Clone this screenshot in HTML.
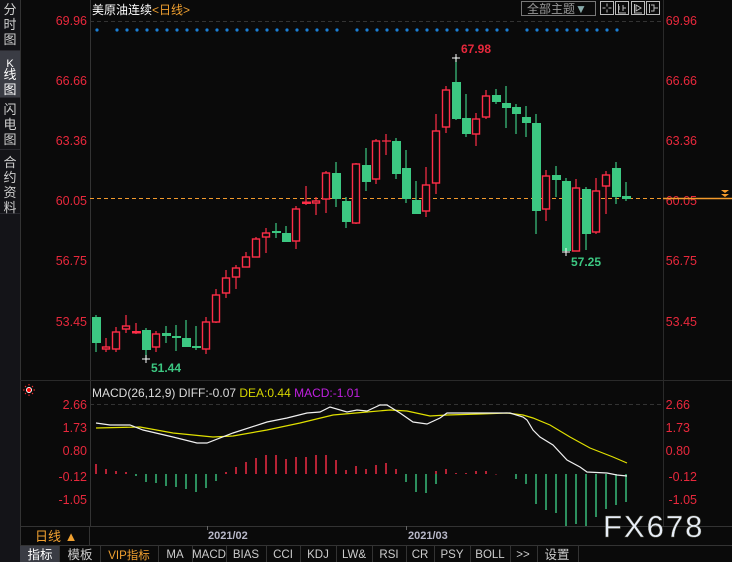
<!DOCTYPE html>
<html><head><meta charset="utf-8"><style>
html,body{margin:0;padding:0;background:#0a0a0a;width:732px;height:562px;overflow:hidden}
svg{display:block}
text{font-family:"Liberation Sans","Noto Sans CJK SC",sans-serif}
</style></head><body>
<svg width="732" height="562" viewBox="0 0 732 562" xmlns="http://www.w3.org/2000/svg">
<rect width="732" height="562" fill="#0a0a0a"/>
<!-- sidebar -->
<rect x="0" y="0" width="20" height="562" fill="#141418"/>
<rect x="0" y="51" width="20" height="46" fill="#3a3c44"/>
<path d="M0 50.5H20M0 97.5H20M0 149.5H20M0 213.5H20" stroke="#2a2a30"/>
<line x1="20.5" y1="0" x2="20.5" y2="562" stroke="#333"/>
<g font-size="13" fill="#cfcfcf" text-anchor="middle">
<text x="10" y="14">分</text><text x="10" y="29">时</text><text x="10" y="44">图</text>
<text x="10" y="67" fill="#fff" font-size="11">K</text><text x="10" y="79" fill="#fff">线</text><text x="10" y="94" fill="#fff">图</text>
<text x="10" y="114">闪</text><text x="10" y="129">电</text><text x="10" y="144">图</text>
<text x="10" y="167">合</text><text x="10" y="182">约</text><text x="10" y="197">资</text><text x="10" y="212">料</text>
</g>
<!-- axes lines -->
<line x1="90.5" y1="0" x2="90.5" y2="526" stroke="#333"/>
<line x1="663.5" y1="0" x2="663.5" y2="526" stroke="#2a2a2a"/>
<line x1="90" y1="21.5" x2="663" y2="21.5" stroke="#333" stroke-dasharray="4,3"/>
<line x1="90" y1="404.5" x2="663" y2="404.5" stroke="#333" stroke-dasharray="4,3"/>
<line x1="20" y1="380.5" x2="732" y2="380.5" stroke="#2a2a2a"/>
<line x1="20" y1="526.5" x2="732" y2="526.5" stroke="#333"/>
<line x1="20" y1="545.5" x2="732" y2="545.5" stroke="#333"/>
<line x1="89.5" y1="526" x2="89.5" y2="545" stroke="#333"/>
<!-- price labels -->
<g font-size="12.5" fill="#e8283c" text-anchor="end">
<text x="87" y="25">69.96</text><text x="87" y="85">66.66</text><text x="87" y="145">63.36</text><text x="87" y="205">60.05</text><text x="87" y="265">56.75</text><text x="87" y="326">53.45</text>
<text x="697" y="25">69.96</text><text x="697" y="85">66.66</text><text x="697" y="145">63.36</text><text x="697" y="205">60.05</text><text x="697" y="265">56.75</text><text x="697" y="326">53.45</text>
<text x="87" y="409">2.66</text><text x="87" y="432">1.73</text><text x="87" y="455">0.80</text><text x="87" y="481">-0.12</text><text x="87" y="504">-1.05</text>
<text x="690" y="409">2.66</text><text x="690" y="432">1.73</text><text x="690" y="455">0.80</text><text x="697" y="481">-0.12</text><text x="697" y="504">-1.05</text>
</g>
<!-- header -->
<text x="92" y="14" font-size="12" fill="#fff">美原油连续<tspan fill="#f0a030">&lt;日线&gt;</tspan></text>
<rect x="521.5" y="1.5" width="74" height="14" fill="#0a0a0a" stroke="#777"/>
<text x="527" y="13" font-size="12" fill="#999">全部主题<tspan fill="#8aa">▼</tspan></text>
<g fill="none" stroke="#bbb">
<rect x="600.5" y="1.5" width="13" height="13"/><rect x="615.5" y="1.5" width="13" height="13"/><rect x="631.5" y="1.5" width="13" height="13"/><rect x="646.5" y="1.5" width="13" height="13"/>
<path d="M607 3.5V6.5M607 9.5V12.5M602.5 8H605.5M608.5 8H611.5M618.5 4V13H626M619 6V10M623 5V11M623 8H626"/>
<path d="M634.5 4V13H642M636 5V11L641 8Z M649.5 4V13M651 5H654V11H651M654 8H658"/>
</g>
<!-- blue dots -->
<g fill="#1a7fd6">
<circle cx="97" cy="30" r="1.6"/><circle cx="117" cy="30" r="1.6"/><circle cx="127" cy="30" r="1.6"/><circle cx="137" cy="30" r="1.6"/><circle cx="147" cy="30" r="1.6"/><circle cx="157" cy="30" r="1.6"/><circle cx="167" cy="30" r="1.6"/><circle cx="177" cy="30" r="1.6"/><circle cx="187" cy="30" r="1.6"/><circle cx="197" cy="30" r="1.6"/><circle cx="207" cy="30" r="1.6"/><circle cx="217" cy="30" r="1.6"/><circle cx="227" cy="30" r="1.6"/><circle cx="237" cy="30" r="1.6"/><circle cx="247" cy="30" r="1.6"/><circle cx="257" cy="30" r="1.6"/><circle cx="267" cy="30" r="1.6"/><circle cx="277" cy="30" r="1.6"/><circle cx="287" cy="30" r="1.6"/><circle cx="297" cy="30" r="1.6"/><circle cx="307" cy="30" r="1.6"/><circle cx="317" cy="30" r="1.6"/><circle cx="327" cy="30" r="1.6"/><circle cx="337" cy="30" r="1.6"/><circle cx="357" cy="30" r="1.6"/><circle cx="367" cy="30" r="1.6"/><circle cx="377" cy="30" r="1.6"/><circle cx="387" cy="30" r="1.6"/><circle cx="397" cy="30" r="1.6"/><circle cx="407" cy="30" r="1.6"/><circle cx="417" cy="30" r="1.6"/><circle cx="427" cy="30" r="1.6"/><circle cx="437" cy="30" r="1.6"/><circle cx="447" cy="30" r="1.6"/><circle cx="457" cy="30" r="1.6"/><circle cx="467" cy="30" r="1.6"/><circle cx="477" cy="30" r="1.6"/><circle cx="487" cy="30" r="1.6"/><circle cx="497" cy="30" r="1.6"/><circle cx="507" cy="30" r="1.6"/><circle cx="527" cy="30" r="1.6"/><circle cx="537" cy="30" r="1.6"/><circle cx="547" cy="30" r="1.6"/><circle cx="557" cy="30" r="1.6"/><circle cx="567" cy="30" r="1.6"/><circle cx="577" cy="30" r="1.6"/><circle cx="587" cy="30" r="1.6"/><circle cx="597" cy="30" r="1.6"/><circle cx="607" cy="30" r="1.6"/><circle cx="617" cy="30" r="1.6"/>
</g>
<!-- orange line -->
<line x1="90" y1="198.5" x2="663" y2="198.5" stroke="#f39a2c" stroke-dasharray="4,3"/>
<line x1="663" y1="198.5" x2="732" y2="198.5" stroke="#f39a2c" stroke-width="1.5"/>
<path d="M721 190H729L725 193ZM721 194H729L725 197Z" fill="#f39a2c"/>
<!-- wicks -->
<path stroke="#3cc882" stroke-width="1.2" fill="none" d="M96 315V352M146 328V360M166 326V343M176 325V351M186 320V347M196 326V350M276 223V238M286 226V242M336 162V207M346 197V228M366 148V191M396 138V179M406 150V203M416 181V214M456 57V120M466 94V137M496 89V104M506 86V128M516 104V134M526 106V137M536 114V234M556 166V197M566 178V252M586 187V250M616 162V204M626 182V201"/>
<path stroke="#ff2e48" stroke-width="1.2" fill="none" d="M106 338V352M116 327V352M126 315V333M136 323V334M156 331V352M206 317V354M216 289V323M226 270V298M236 265V289M246 252V267M256 237V257M266 228V253M296 206V249M306 186V205M316 197V215M326 171V213M356 163V224M376 139V184M386 134V155M382 141H391M426 167V217M436 114V194M446 86V133M476 113V146M486 90V119M546 170V221M576 179V251M596 178V234M606 171V214"/>
<!-- green bodies -->
<g fill="#3cc882">
<rect x="92" y="317" width="9" height="26"/><rect x="142" y="330" width="9" height="20"/><rect x="162" y="333" width="9" height="3"/><rect x="172" y="336" width="9" height="2"/><rect x="182" y="338" width="9" height="9"/><rect x="192" y="346" width="9" height="2"/><rect x="272" y="231" width="9" height="2"/><rect x="282" y="233" width="9" height="9"/><rect x="332" y="173" width="9" height="26"/><rect x="342" y="201" width="9" height="21"/><rect x="362" y="165" width="9" height="17"/><rect x="392" y="141" width="9" height="33"/><rect x="402" y="168" width="9" height="31"/><rect x="412" y="200" width="9" height="14"/><rect x="452" y="82" width="9" height="37"/><rect x="462" y="118" width="9" height="16"/><rect x="492" y="95" width="9" height="7"/><rect x="502" y="103" width="9" height="5"/><rect x="512" y="107" width="9" height="7"/><rect x="522" y="117" width="9" height="6"/><rect x="532" y="123" width="9" height="88"/><rect x="552" y="175" width="9" height="5"/><rect x="562" y="181" width="9" height="70"/><rect x="582" y="189" width="9" height="45"/><rect x="612" y="168" width="9" height="29"/><rect x="622" y="196" width="9" height="3"/>
</g>
<!-- red bodies -->
<g fill="#0a0a0a" stroke="#ff2e48" stroke-width="1.4">
<rect x="102.5" y="347" width="7" height="2"/><rect x="112.5" y="332" width="7" height="17"/><rect x="122.5" y="326" width="7" height="3"/><rect x="152.5" y="334" width="7" height="13"/><rect x="202.5" y="322" width="7" height="27"/><rect x="212.5" y="295" width="7" height="27"/><rect x="222.5" y="278" width="7" height="15"/><rect x="232.5" y="268" width="7" height="9"/><rect x="242.5" y="257" width="7" height="10"/><rect x="252.5" y="239" width="7" height="18"/><rect x="262.5" y="233" width="7" height="4"/><rect x="292.5" y="209" width="7" height="32"/><rect x="312.5" y="201" width="7" height="2"/><rect x="322.5" y="173" width="7" height="26"/><rect x="352.5" y="164" width="7" height="59"/><rect x="372.5" y="141" width="7" height="38"/><rect x="422.5" y="185" width="7" height="26"/><rect x="432.5" y="131" width="7" height="52"/><rect x="442.5" y="90" width="7" height="37"/><rect x="472.5" y="119" width="7" height="15"/><rect x="482.5" y="96" width="7" height="21"/><rect x="542.5" y="176" width="7" height="33"/><rect x="572.5" y="188" width="7" height="63"/><rect x="592.5" y="191" width="7" height="41"/><rect x="602.5" y="175" width="7" height="11"/>
</g>
<rect x="132" y="331" width="9" height="2.5" fill="#ff2e48"/><rect x="302" y="201.5" width="9" height="2.5" fill="#ff2e48"/>
<!-- markers -->
<text x="461" y="53" font-size="12" font-weight="bold" fill="#e8283c">67.98</text>
<text x="151" y="372" font-size="12" font-weight="bold" fill="#3cc882">51.44</text>
<text x="571" y="266" font-size="12" font-weight="bold" fill="#3cc882">57.25</text>
<path d="M452 58H460M456 54V62M142 359H150M146 355V363M562 252H570M566 248V256" stroke="#fff"/>
<!-- MACD -->
<circle cx="29" cy="390" r="2.5" fill="#f00" stroke="#fff" stroke-width="1"/>
<path d="M29 384V385.5M29 394.5V396M23 390H24.5M33.5 390H35M25 386L26 387M33 386L32 387M25 394L26 393M33 394L32 393" stroke="#f33"/>
<text x="92" y="397" font-size="12" fill="#ddd">MACD(26,12,9) DIFF:-0.07 <tspan fill="#d8d800">DEA:0.44</tspan> <tspan fill="#c020e0">MACD:-1.01</tspan></text>
<path stroke="#ff2e48" stroke-width="1.4" d="M96 474V464M106 474V469M116 474V471M126 474V472M226 474V472M236 474V467M246 474V462M256 474V458M266 474V455M276 474V455M286 474V459M296 474V457M306 474V457M316 474V455M326 474V455M336 474V460M346 474V470M356 474V466M366 474V469M376 474V465M386 474V463M396 474V469M436 474V471M446 474V469M456 474V473M466 474V473M476 474V471M486 474V471M496 474V474.5"/>
<path stroke="#3cc882" stroke-width="1.4" d="M136 474V476M146 474V482M156 474V483M166 474V486M176 474V487M186 474V489M196 474V492M206 474V488M216 474V481M406 474V482M416 474V492M426 474V493M436 474V484M516 474V479M526 474V484M536 474V504M546 474V510M556 474V513M566 474V526M576 474V524M586 474V526M596 474V517M606 474V509M616 474V505M626 474V502"/>
<polyline fill="none" stroke="#e0e000" stroke-width="1.2" points="96,428 140,427 173,433 213,437 233,436 267,430 300,423 333,415 367,412 390,410 407,411 430,416 447,415 480,414 507,413 523,415 533,418 550,425 570,437 590,448 613,457 627,463"/>
<polyline fill="none" stroke="#f0f0f0" stroke-width="1.2" points="96,423 110,425 130,425 143,430 173,437 197,443 207,443 233,433 267,422 287,418 307,413 320,412 330,407 347,412 357,410 367,411 380,405 387,405 400,413 413,422 427,424 440,418 447,413 487,413 510,413 523,417 527,420 533,430 540,437 553,445 567,460 580,467 587,472 607,473 617,475 627,476"/>
<!-- date axis -->
<line x1="207.5" y1="526" x2="207.5" y2="530" stroke="#666"/><line x1="406.5" y1="526" x2="406.5" y2="530" stroke="#666"/>
<text x="35" y="541" font-size="13" fill="#f0a030">日线 ▲</text>
<text x="208" y="539" font-size="11" font-weight="bold" fill="#b8b8c8">2021/02</text>
<text x="408" y="539" font-size="11" font-weight="bold" fill="#b8b8c8">2021/03</text>
<text x="603" y="537" font-size="31" fill="#e8eef8" stroke="#554" stroke-width="0.4" letter-spacing="2" font-family="Liberation Sans">FX678</text>
<!-- bottom tabs -->
<rect x="20" y="546" width="39" height="16" fill="#3a3c44"/>
<path stroke="#333" d="M59.5 546V562M100.5 546V562M158.5 546V562M192.5 546V562M226.5 546V562M266.5 546V562M300.5 546V562M336.5 546V562M372.5 546V562M406.5 546V562M434.5 546V562M470.5 546V562M510.5 546V562M537.5 546V562M578.5 546V562"/>
<g font-size="11.5" fill="#ccc" text-anchor="middle" font-family="Liberation Mono,Noto Sans CJK SC,monospace">
<text x="40" y="559" fill="#fff" font-size="12.5">指标</text><text x="80" y="559" font-size="12.5">模板</text><text x="129" y="559" fill="#f0a030">VIP指标</text><text x="175" y="558">MA</text><text x="209" y="558">MACD</text><text x="246" y="558">BIAS</text><text x="283" y="558">CCI</text><text x="318" y="558">KDJ</text><text x="354" y="558">LW&amp;</text><text x="389" y="558">RSI</text><text x="420" y="558">CR</text><text x="452" y="558">PSY</text><text x="490" y="558">BOLL</text><text x="523" y="558">&gt;&gt;</text><text x="557" y="559" font-size="12.5">设置</text>
</g>
</svg>
</body></html>
